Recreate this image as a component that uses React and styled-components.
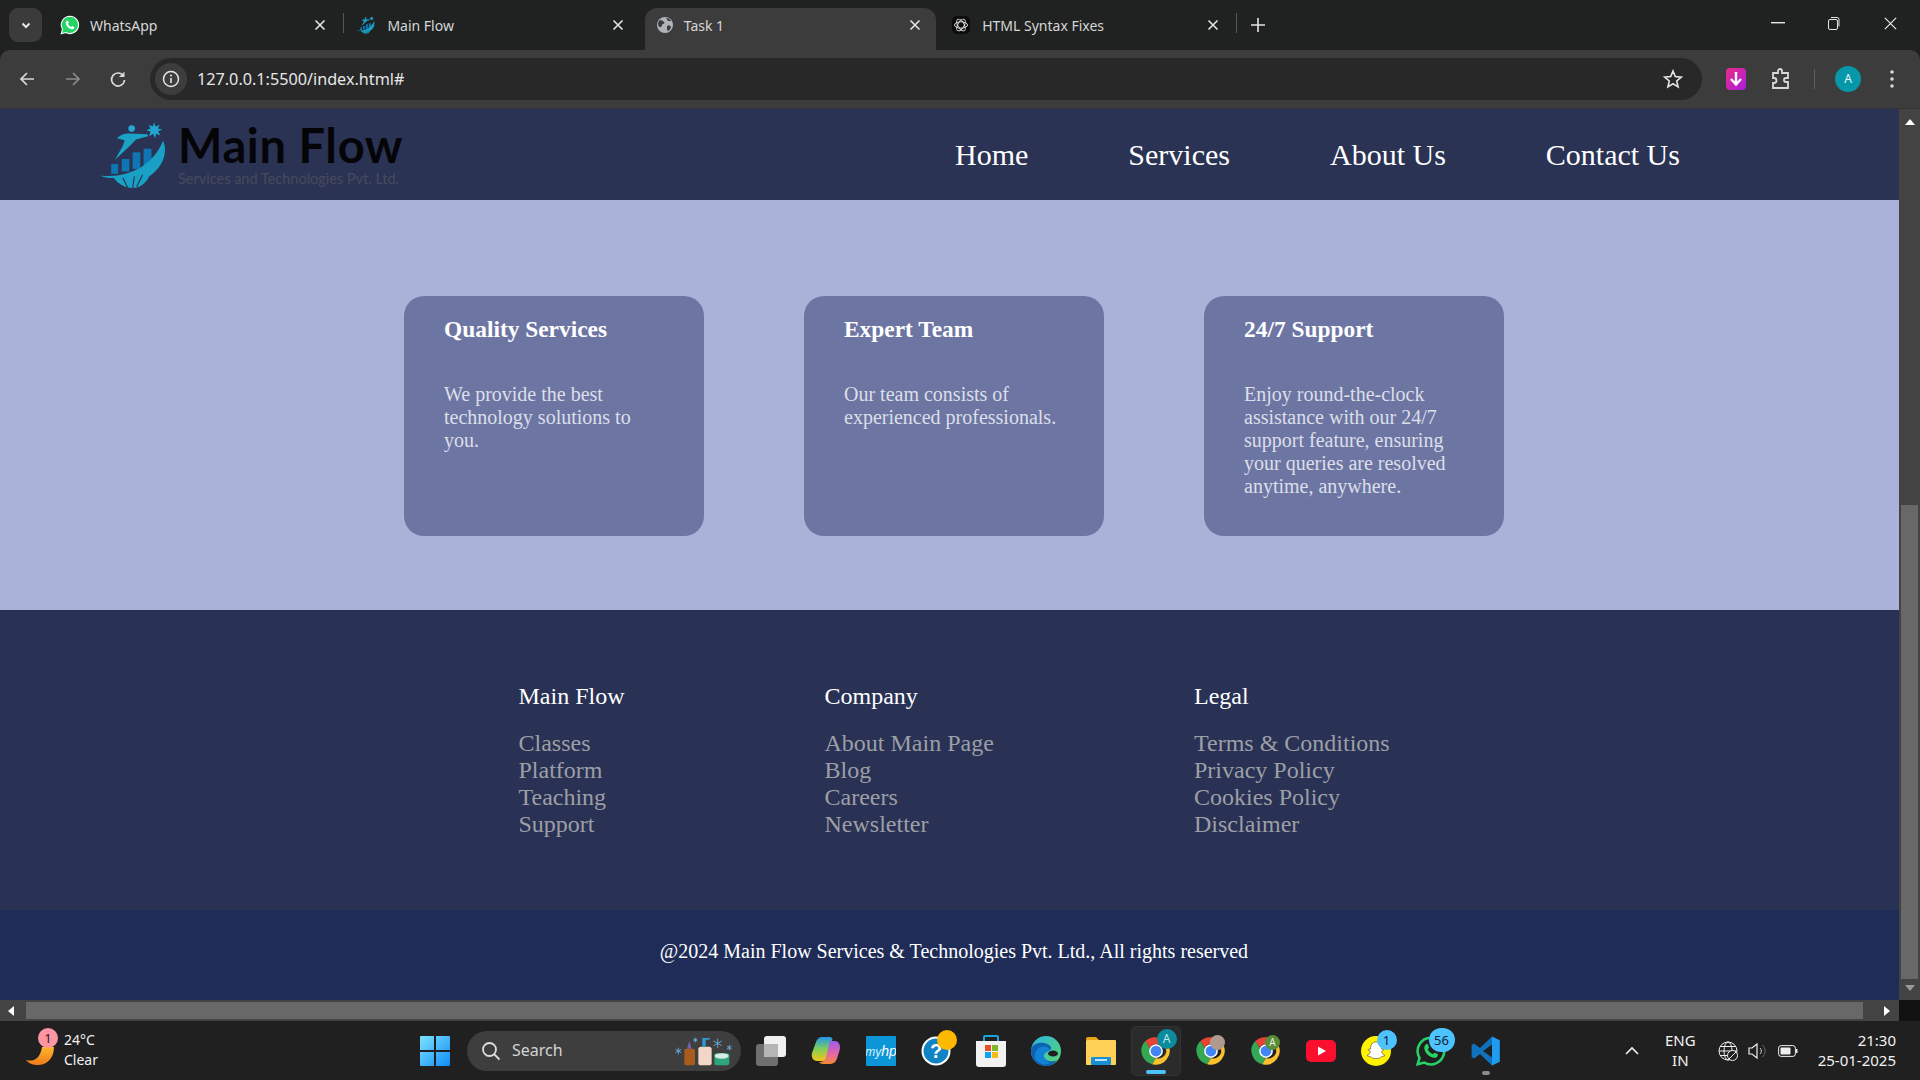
import React from "react";
import styled, { createGlobalStyle } from "styled-components";

const Global = createGlobalStyle`
  html, body { margin: 0; padding: 0; background: #202020; overflow: hidden; }
  * { box-sizing: border-box; }
`;
const ui = `"Noto Sans", "Open Sans", sans-serif`;
const serif = `"Liberation Serif", "Times New Roman", serif`;

const Screen = styled.div`
  width: 1920px; height: 1080px; display: flex; flex-direction: column; overflow: hidden; font-family: ${ui};
`;
const TabStrip = styled.div`
  height: 50px; flex: none; background: #202222; display: flex; align-items: flex-start; padding: 8px 0 0 9px;
`;
const TabMenu = styled.div`
  width: 33px; height: 34px; margin-right: 6px; border-radius: 9px; background: #3b3b3b; display: flex; align-items: center; justify-content: center; color: #e8e8e8;
`;
const Tab = styled.div`
  width: 297.4px; height: 42px; flex: none; display: flex; align-items: center; padding: 0 0 8px 0; position: relative;
  color: #d6d6d6; font-size: 14px; background: ${p => (p.$active ? "#3c3c3c" : "transparent")};
  border-radius: ${p => (p.$active ? "12px 12px 0 0" : "0")};
  ${p => p.$active && "margin-left:2px;margin-right:4.4px;width:291px;"}
  ${p => p.$sep && `&::after{content:"";position:absolute;right:1px;top:5px;height:20px;width:1px;background:#555;}`}
`;
const TabIcon = styled.span`
  width: ${p => (p.$active ? "39px" : "42px")}; padding-left: 12px; flex: none; display: flex; align-items: center;
`;
const TabTitle = styled.span`
  flex: 1; white-space: nowrap; margin-top: 1px;
`;
const TabClose = styled.span`
  width: ${p => (p.$active ? "27px" : "42px")}; flex: none; display: flex; padding-left: ${p => (p.$active ? "0" : "11px")}; color: #e4e4e4;
`;
const NewTab = styled.div`
  margin-left: 13px; height: 34px; display: flex; align-items: center; color: #e4e4e4;
`;
const WindowControls = styled.div`
  margin-left: auto; display: flex; height: 34px; margin-top: -2px; color: #e6e6e6; padding-right: 1px;
`;
const WinBtn = styled.div`
  width: 56.5px; display: flex; align-items: center; justify-content: center;
`;
const Toolbar = styled.div`
  height: 59px; flex: none; background: #3c3c3c; border-radius: 10px 10px 0 0; display: flex; align-items: center; padding: 0 0 1px 4px; border-bottom: 1px solid #333;
`;
const ToolBtn = styled.div`
  width: ${p => p.$w || 46}px; height: 40px; flex: none; display: flex; align-items: center; justify-content: center;
  color: ${p => (p.$dim ? "#8b8b8b" : "#d8d8d8")};
`;
const Omni = styled.div`
  margin-left: 10px; width: 1552px; height: 42px; background: #282828; border-radius: 21px; display: flex; align-items: center; padding: 0 19px 0 5px; color: #e6e6e6; flex: none;
`;
const InfoBubble = styled.div`
  width: 32px; height: 32px; border-radius: 50%; background: #3d3d3d; display: flex; align-items: center; justify-content: center; margin-right: 10px;
`;
const Url = styled.span`
  font-size: 16.2px; flex: 1;
`;
const ToolRight = styled.div`
  flex: 1; display: flex; align-items: center; padding-left: 13px;
`;
const Divider = styled.div`
  width: 1px; height: 20px; background: #5e5e5e; margin: 0 10px 0 10px;
`;
const Avatar = styled.div`
  width: 26px; height: 26px; border-radius: 50%; background: #0797ab; color: #e8f6f8; font-size: 12px; display: flex; align-items: center; justify-content: center; margin: 0 9px 0 10px;
`;
const Viewport = styled.div`
  flex: 1; min-height: 0; display: flex; overflow: hidden;
`;
const PageClip = styled.div`
  width: 1899px; overflow: hidden; flex: none;
`;
const Page = styled.div`
  width: 1908px; font-family: ${serif};
`;
const Nav = styled.nav`
  height: 91px; background: #2a3354; display: flex; align-items: center; padding: 0 0 0 99px;
`;
const Logo = styled.div`
  display: flex; align-items: flex-start; width: 856px; height: 70px; flex: none; margin-top: 2px;
`;
const LogoText = styled.div`
  margin-left: 11px; display: flex; flex-direction: column; font-family: Lato, sans-serif;
`;
const LogoName = styled.div`
  color: #050508; font-weight: 700; font-size: 47px; line-height: 44px; letter-spacing: .6px; white-space: nowrap; margin-top: 2px;
`;
const LogoSub = styled.div`
  color: #474a5a; font-size: 14.5px; line-height: 14px; white-space: nowrap; margin-top: 5px;
`;
const NavLinks = styled.div`
  display: flex; gap: 100px; padding-top: 1px;
`;
const NavLink = styled.a`
  color: #fff; font-size: 30px; white-space: nowrap;
`;
const Features = styled.section`
  height: 410px; background: #aab2da; display: flex; justify-content: center; gap: 100px; padding-top: 96px;
`;
const Card = styled.div`
  width: 300px; height: 240px; background: #6d76a3; border-radius: 20px; padding: 21px 40px 0;
`;
const CardTitle = styled.h3`
  margin: 0 0 41px; color: #fff; font-size: 23.4px; line-height: 25px; font-weight: 700;
`;
const CardText = styled.p`
  margin: 0; color: #dcdfe9; font-size: 20px; line-height: 23px;
`;
const FooterMain = styled.footer`
  height: 300px; background: #293254; display: grid; grid-template-columns: 306px 369.5px 1fr; padding: 70px 0 0 518.5px;
`;
const FootCol = styled.div`
  display: flex; flex-direction: column;
`;
const FootHead = styled.div`
  color: #fff; font-size: 24px; line-height: 32px; margin-bottom: 18px;
`;
const FootLink = styled.a`
  color: #9d9fa6; font-size: 24px; line-height: 27px; white-space: nowrap;
`;
const Copyright = styled.div`
  height: 90px; background: #1e2c57; color: #fff; font-size: 20px; display: flex; align-items: center; justify-content: center; padding-bottom: 8px;
`;
const VScroll = styled.div`
  width: 21px; flex: none; background: #434343; display: flex; flex-direction: column; align-items: center;
`;
const VArrow = styled.div`
  height: ${p => p.$h}px; flex: none; display: flex; align-items: center; justify-content: center;
`;
const VThumb = styled.div`
  width: 17px; height: 474px; background: #686868; margin-top: 370px; flex: none;
`;
const HScrollRow = styled.div`
  height: 21px; flex: none; display: flex; background: #434343; align-items: center;
`;
const HArrow = styled.div`
  width: ${p => p.$w}px; flex: none; display: flex; align-items: center; justify-content: center;
`;
const HThumb = styled.div`
  width: 1837px; height: 17px; background: #686868; flex: none; margin: 0 12px 0 5px;
`;
const Corner = styled.div`
  width: 21px; height: 21px; background: #121212; margin-left: auto; flex: none;
`;
const Taskbar = styled.div`
  height: 59px; flex: none; background: #202020; display: flex; align-items: center; padding-left: 26px; color: #fff; position: relative; font-size: 14px;
`;
const Weather = styled.div`
  width: 394px; flex: none; display: flex; align-items: center; gap: 10px; position: relative;
`;
const WeatherBadge = styled.div`
  position: absolute; left: 12px; top: -4px; width: 20px; height: 20px; border-radius: 50%; background: #ff96a3; color: #3a1115; font-size: 13px; display: flex; align-items: center; justify-content: center;
`;
const TwoLine = styled.div`
  display: flex; flex-direction: column; line-height: 20px; font-size: ${p => p.$size || 14}px; text-align: ${p => p.$align || "left"}; color: #f2f2f2; margin-top: -2px;
  margin-left: ${p => p.$ml || 0}px; margin-right: ${p => p.$mr || 0}px;
`;
const SearchBox = styled.div`
  margin-left: 17px; width: 274px; height: 40px; border-radius: 20px; background: #3e3e3e; display: flex; align-items: center; padding: 0 8px 0 14px; color: #d4d4d4; font-size: 16px; flex: none;
`;
const SearchLabel = styled.span`
  flex: 1; margin-left: 11px; padding-bottom: 2px;
`;
const AppIcon = styled.div`
  width: 55px; height: 50px; flex: none; display: flex; align-items: center; justify-content: center; position: relative;
  ${p => p.$active && "background:#2b2b2b;border-radius:5px;width:50px;margin:0 2.5px;border:1px solid #333;"}
  ${p => p.$mark && `&::after{content:"";position:absolute;bottom:1px;left:50%;transform:translateX(-50%);height:4px;border-radius:2px;width:${p.$mark === "on" ? 20 : 8}px;background:${p.$mark === "on" ? "#4cc2ff" : "#8a8a8a"};}`}
`;
const Pip = styled.div`
  position: absolute; right: ${p => p.$r}px; top: ${p => p.$t}px; width: ${p => p.$w || p.$s}px; height: ${p => p.$s}px; border-radius: ${p => p.$s / 2}px;
  background: ${p => p.$bg}; color: ${p => p.$fg || "#10222e"}; font-size: ${p => p.$font || 13}px; display: flex; align-items: center; justify-content: center;
`;
const AppRow = styled.div`
  display: flex; margin-left: 2px; align-items: center;
`;
const Tray = styled.div`
  position: absolute; right: 24px; top: 0; bottom: 0; display: flex; align-items: center;
`;
const TrayIcon = styled.div`
  width: ${p => p.$w || 30}px; display: flex; justify-content: center; color: #eee;
`;

const X = ({ s = 12, w = 1.6 }) => (
  <svg width={s} height={s} viewBox="0 0 12 12"><path d="M1.5 1.5l9 9M10.5 1.5l-9 9" stroke="currentColor" strokeWidth={w} /></svg>
);
const WaIcon = ({ s = 20 }) => (
  <svg width={s} height={s} viewBox="0 0 24 24">
    <path d="M12 1.5a10.4 10.4 0 0 0-9 15.6L1.5 22.5l5.5-1.4A10.4 10.4 0 1 0 12 1.5z" fill="#25d366" stroke="#fff" strokeWidth="1.3" />
    <path d="M8.4 6.9c.6-.5 1-.2 1.3.4l.8 1.8c.1.4-.6 1.1-.9 1.6.8 1.7 2 2.9 3.8 3.7.5-.5 1-1.3 1.5-1.1l1.9 1c.5.2.5.7.2 1.4-.6 1.3-2.2 1.7-3.7 1.2-3.3-1-5.7-3.4-6.3-6.6-.2-1.4.2-2.7 1.4-3.4z" fill="#fff" />
  </svg>
);
const WaOutline = () => (
  <svg width="32" height="32" viewBox="0 0 24 24">
    <path d="M12 2a10 10 0 0 0-8.6 15.1L2 22l5-1.3A10 10 0 1 0 12 2z" fill="none" stroke="#25d366" strokeWidth="1.9" />
    <path d="M8.4 6.9c.6-.5 1-.2 1.3.4l.8 1.8c.1.4-.6 1.1-.9 1.6.8 1.7 2 2.9 3.8 3.7.5-.5 1-1.3 1.5-1.1l1.9 1c.5.2.5.7.2 1.4-.6 1.3-2.2 1.7-3.7 1.2-3.3-1-5.7-3.4-6.3-6.6-.2-1.4.2-2.7 1.4-3.4z" fill="#25d366" />
  </svg>
);
const LogoMark = ({ s = 18, bg = "#2a3354" }) => (
  <svg width={s} height={s} viewBox="28 40 206 206">
    <circle cx="127" cy="63" r="10" fill="#27a6cf" />
    <path d="M82 92Q100 75 122 78L175 80L177 86L140 96L125 112L76 158L100 116L106 98Z" fill="#1ba3c6" />
    <path d="M195 44l4 13 13-6-6 12 14 3-13 5 7 13-13-5-3 13-6-13-12 7 4-14-13-4 13-5-6-12 13 6z" fill="#22a5cf" />
    <rect x="65" y="170" width="21" height="30" fill="#0f76b4" /><rect x="97" y="155" width="23" height="38" fill="#0f76b4" />
    <rect x="130" y="135" width="23" height="50" fill="#0f76b4" /><rect x="163" y="124" width="24" height="52" fill="#0f76b4" />
    <path d="M30 205C110 215 190 180 222 100C240 140 215 185 180 208C170 230 150 243 130 243C105 243 85 230 73 213C55 213 40 210 30 205Z" fill="#18a1c4" />
    <path d="M100 212l15 30M135 208l-5 35M160 203l-18 36" stroke={bg} strokeWidth="3.5" />
  </svg>
);
const Globe = ({ s = 16, c = "#b0b3b8" }) => (
  <svg width={s} height={s} viewBox="0 0 16 16"><circle cx="8" cy="8" r="8" fill={c} /><path d="M3 3c2 0 3 1 4 2s0 2-1 2-1 2-2 3-3-1-3-3 1-3 2-4zM10 9c2-1 4 0 4 1s-2 4-3 4-1-3-1-5zM9 1c2 0 4 1 5 3l-3 0-2-3z" fill="#3c3c3c" /></svg>
);
const GptIcon = () => (
  <svg width="18" height="18" viewBox="0 0 18 18"><rect width="18" height="18" rx="5" fill="#0c0c0c" /><g fill="none" stroke="#ddd" strokeWidth="1"><ellipse cx="9" cy="9" rx="6.5" ry="3.2" /><ellipse cx="9" cy="9" rx="6.5" ry="3.2" transform="rotate(60 9 9)" /><ellipse cx="9" cy="9" rx="6.5" ry="3.2" transform="rotate(120 9 9)" /></g></svg>
);
const Chrome = ({ s = 30 }) => (
  <svg width={s} height={s} viewBox="0 0 48 48">
    <path d="M24 2a22 22 0 0 1 19 11H24a11 11 0 0 0-10 6L7 8A22 22 0 0 1 24 2z" fill="#ea4335" />
    <path d="M7 8l8 13a11 11 0 0 0 9 14l-6 10A22 22 0 0 1 7 8z" fill="#34a853" />
    <path d="M43 13a22 22 0 0 1-25 32l6-10a11 11 0 0 0 9-22z" fill="#fbc02d" />
    <circle cx="24" cy="24" r="11" fill="#fff" /><circle cx="24" cy="24" r="8.6" fill="#4285f4" />
  </svg>
);
const Flake = ({ x, y, r }) => (
  <g transform={`translate(${x} ${y})`} stroke="#6fb4e6" strokeWidth="2.5">
    <path d={`M0 ${-r}V${r}M${-r * .87} ${-r / 2}L${r * .87} ${r / 2}M${r * .87} ${-r / 2}L${-r * .87} ${r / 2}`} />
  </g>
);

const tabs = [
  { t: "WhatsApp", i: <WaIcon />, sep: true },
  { t: "Main Flow", i: <LogoMark bg="#202222" /> },
  { t: "Task 1", i: <Globe />, active: true },
  { t: "HTML Syntax Fixes", i: <GptIcon />, sep: true },
];
const groups = [
  { h: "Main Flow", l: ["Classes", "Platform", "Teaching", "Support"] },
  { h: "Company", l: ["About Main Page", "Blog", "Careers", "Newsletter"] },
  { h: "Legal", l: ["Terms & Conditions", "Privacy Policy", "Cookies Policy", "Disclaimer"] },
];
const cards = [
  ["Quality Services", "We provide the best technology solutions to you."],
  ["Expert Team", "Our team consists of experienced professionals."],
  ["24/7 Support", "Enjoy round-the-clock assistance with our 24/7 support feature, ensuring your queries are resolved anytime, anywhere."],
];

export default function App() {
  return (
    <Screen>
      <Global />
      <TabStrip>
        <TabMenu><svg width="12" height="12" viewBox="0 0 12 12"><path d="M2.5 4.5 6 8l3.5-3.5" fill="none" stroke="currentColor" strokeWidth="2" /></svg></TabMenu>
        {tabs.map(t => (
          <Tab key={t.t} $active={t.active} $sep={t.sep}>
            <TabIcon $active={t.active}>{t.i}</TabIcon>
            <TabTitle>{t.t}</TabTitle>
            <TabClose $active={t.active}><X /></TabClose>
          </Tab>
        ))}
        <NewTab><svg width="14" height="14" viewBox="0 0 14 14"><path d="M7 0v14M0 7h14" stroke="currentColor" strokeWidth="1.6" /></svg></NewTab>
        <WindowControls>
          <WinBtn><svg width="14" height="2"><rect width="14" height="1.4" fill="currentColor" /></svg></WinBtn>
          <WinBtn><svg width="14" height="14" viewBox="0 0 14 14"><rect x="1.5" y="3.5" width="9" height="10" rx="1.5" fill="none" stroke="currentColor" /><path d="M4 1.5h6a2 2 0 0 1 2 2v7" fill="none" stroke="currentColor" /></svg></WinBtn>
          <WinBtn><X s={15} w={1} /></WinBtn>
        </WindowControls>
      </TabStrip>
      <Toolbar>
        <ToolBtn><svg width="18" height="18" viewBox="0 0 18 18"><path d="M16 9H3M9 3 3 9l6 6" fill="none" stroke="currentColor" strokeWidth="1.7" /></svg></ToolBtn>
        <ToolBtn $dim><svg width="18" height="18" viewBox="0 0 18 18"><path d="M2 9h13M9 3l6 6-6 6" fill="none" stroke="currentColor" strokeWidth="1.7" /></svg></ToolBtn>
        <ToolBtn $w={44}><svg width="18" height="18" viewBox="0 0 18 18"><path d="M14.5 6A6.5 6.5 0 1 0 15.5 10" fill="none" stroke="currentColor" strokeWidth="1.7" /><path d="M15.5 1.5v5.5H10z" fill="currentColor" /></svg></ToolBtn>
        <Omni>
          <InfoBubble><svg width="18" height="18" viewBox="0 0 18 18"><circle cx="9" cy="9" r="7.5" fill="none" stroke="#e6e6e6" strokeWidth="1.5" /><path d="M9 8v5" stroke="#e6e6e6" strokeWidth="1.6" /><circle cx="9" cy="5.5" r="1" fill="#e6e6e6" /></svg></InfoBubble>
          <Url>127.0.0.1:5500/index.html#</Url>
          <svg width="20" height="20" viewBox="0 0 20 20"><path d="M10 2l2.3 5.6 6 .5-4.6 3.9 1.4 5.9L10 14.8 4.9 17.9l1.4-5.9L1.7 8.1l6-.5z" fill="none" stroke="#e6e6e6" strokeWidth="1.6" /></svg>
        </Omni>
        <ToolRight>
          <ToolBtn $w={42}><svg width="20" height="22" viewBox="0 0 20 22"><defs><linearGradient id="ext" x1="0" y1="0" x2="1" y2="1"><stop offset="0" stopColor="#ec2b85" /><stop offset="1" stopColor="#a81ee0" /></linearGradient></defs><rect width="20" height="22" rx="4" fill="url(#ext)" /><path d="M10 4v12M5 11l5 5.5 5-5.5" fill="none" stroke="#fff" strokeWidth="2.4" /></svg></ToolBtn>
          <ToolBtn $w={47}><svg width="20" height="22" viewBox="0 0 20 22"><path d="M2 5h5V3a2 2 0 0 1 4 0v2h6v5h-2a2 2 0 0 0 0 4h2v6H2v-5h1a2.5 2.5 0 0 0 0-5H2z" fill="none" stroke="#d8d8d8" strokeWidth="1.8" /></svg></ToolBtn>
          <Divider />
          <Avatar>A</Avatar>
          <ToolBtn $w={44}><svg width="4" height="18" viewBox="0 0 4 18"><circle cx="2" cy="2" r="1.8" fill="#d8d8d8" /><circle cx="2" cy="9" r="1.8" fill="#d8d8d8" /><circle cx="2" cy="16" r="1.8" fill="#d8d8d8" /></svg></ToolBtn>
        </ToolRight>
      </Toolbar>
      <Viewport>
        <PageClip>
          <Page>
            <Nav>
              <Logo>
                <LogoMark s={68} />
                <LogoText>
                  <LogoName>Main Flow</LogoName>
                  <LogoSub>Services and Technologies Pvt. Ltd.</LogoSub>
                </LogoText>
              </Logo>
              <NavLinks>
                {["Home", "Services", "About Us", "Contact Us"].map(n => <NavLink key={n}>{n}</NavLink>)}
              </NavLinks>
            </Nav>
            <Features>
              {cards.map(([h, p]) => (
                <Card key={h}><CardTitle>{h}</CardTitle><CardText>{p}</CardText></Card>
              ))}
            </Features>
            <FooterMain>
              {groups.map(g => (
                <FootCol key={g.h}>
                  <FootHead>{g.h}</FootHead>
                  {g.l.map(l => <FootLink key={l}>{l}</FootLink>)}
                </FootCol>
              ))}
            </FooterMain>
            <Copyright>@2024 Main Flow Services &amp; Technologies Pvt. Ltd., All rights reserved</Copyright>
          </Page>
        </PageClip>
        <VScroll>
          <VArrow $h={26}><svg width="10" height="6"><path d="M5 0l5 6H0z" fill="#fff" /></svg></VArrow>
          <VThumb />
          <VArrow $h={18}><svg width="10" height="6"><path d="M5 6l5-6H0z" fill="#9a9a9a" /></svg></VArrow>
        </VScroll>
      </Viewport>
      <HScrollRow>
        <HArrow $w={21}><svg width="6" height="10"><path d="M0 5l6-5v10z" fill="#fff" /></svg></HArrow>
        <HThumb />
        <HArrow $w={24}><svg width="6" height="10"><path d="M6 5 0 0v10z" fill="#fff" /></svg></HArrow>
        <Corner />
      </HScrollRow>
      <Taskbar>
        <Weather>
          <svg width="28" height="28" viewBox="0 0 28 28"><defs><linearGradient id="moon" x1="0" y1="0" x2="0" y2="1"><stop offset="0" stopColor="#ffb52e" /><stop offset="1" stopColor="#ee7b1c" /></linearGradient></defs><path d="M28 10C28 22 20 28 12 28C7 28 2 26 0 23C8 25 14 22 16 10Z" fill="url(#moon)" /></svg>
          <WeatherBadge>1</WeatherBadge>
          <TwoLine><span>24°C</span><span>Clear</span></TwoLine>
        </Weather>
        <svg width="30" height="30" viewBox="0 0 30 30"><defs><linearGradient id="win" x1="0" y1="0" x2="1" y2="1"><stop offset="0" stopColor="#7fe3ff" /><stop offset="1" stopColor="#0f8cf5" /></linearGradient></defs><path d="M0 1a1 1 0 0 1 1-1h13v14H0zM16 0h13a1 1 0 0 1 1 1v13H16zM0 16h14v14H1a1 1 0 0 1-1-1zM16 16h14v13a1 1 0 0 1-1 1H16z" fill="url(#win)" /></svg>
        <SearchBox>
          <svg width="20" height="20" viewBox="0 0 20 20"><circle cx="8.5" cy="8.5" r="6.5" fill="none" stroke="#ddd" strokeWidth="1.8" /><path d="M13 13l5.5 5.5" stroke="#ddd" strokeWidth="1.8" /></svg>
          <SearchLabel>Search</SearchLabel>
          <svg width="60" height="32" viewBox="36 27 180 96">
            <Flake x={52} y={75} r={10} /><Flake x={103} y={42} r={7} /><Flake x={170} y={52} r={14} /><Flake x={205} y={65} r={8} />
            <path d="M78 68l7-24 7 24z" fill="#6d62b0" />
            <rect x="70" y="68" width="32" height="50" rx="5" fill="#a85b1c" />
            <rect x="112" y="62" width="40" height="56" rx="8" fill="#f2d7c6" />
            <path d="M124 62V36h22v5h-12v21z" fill="#2d9ad1" />
            <rect x="160" y="82" width="45" height="36" rx="6" fill="#2ea57a" />
            <ellipse cx="182" cy="90" rx="21" ry="8" fill="#d9ece4" />
          </svg>
        </SearchBox>
        <AppRow>
          <AppIcon><svg width="30" height="30" viewBox="0 0 30 30"><rect x="8" y="0" width="22" height="21" rx="3" fill="#f0f0f0" /><rect x="0" y="8" width="22" height="22" rx="3" fill="#6f6f6f" /><rect x="8" y="8" width="14" height="13" fill="#b5b5b5" /></svg></AppIcon>
          <AppIcon><svg width="30" height="30" viewBox="0 0 30 30"><defs><linearGradient id="cp" x1="0" y1="0" x2="0" y2="1"><stop offset="0" stopColor="#2296e8" /><stop offset=".5" stopColor="#7fd05a" /><stop offset="1" stopColor="#f5c518" /></linearGradient><linearGradient id="cp2" x1="0" y1="0" x2="0" y2="1"><stop offset="0" stopColor="#a05af0" /><stop offset=".6" stopColor="#e86aa0" /><stop offset="1" stopColor="#f58a30" /></linearGradient></defs><path d="M11 1h7c2 0 3 .5 3.5 2L17 20c-1 4-3 5-6 5H6C2 25 0 21 1 17L5 6c1-3 3-5 6-5z" fill="url(#cp)" /><path d="M19 5h5c3 0 5 3 5 6s-1 5-2 8c-1 5-3 9-8 9h-7c-2 0-3-1-4-2 4 0 6-1 7-5z" fill="url(#cp2)" /></svg></AppIcon>
          <AppIcon><svg width="30" height="30" viewBox="0 0 30 30"><rect width="30" height="30" rx="1" fill="#0c96d8" /><text x="15" y="20" textAnchor="middle" fontSize="12" fontStyle="italic" fill="#d9f0fb" fontFamily="Liberation Sans">my<tspan fontSize="14" fill="#fff">hp</tspan></text></svg></AppIcon>
          <AppIcon><svg width="30" height="30" viewBox="0 0 30 30"><circle cx="15" cy="15" r="14.5" fill="#fff" /><circle cx="15" cy="15" r="12.5" fill="#0f83c4" /><text x="15" y="22" textAnchor="middle" fontSize="20" fontWeight="700" fill="#fff" fontFamily="Liberation Sans">?</text></svg><Pip $bg="#ffb900" $s={20} $r={6.5} $t={4} /></AppIcon>
          <AppIcon><svg width="30" height="34" viewBox="0 0 30 34"><path d="M8 8V3a1 1 0 0 1 1-1h12a1 1 0 0 1 1 1v5" fill="none" stroke="#19a5dc" strokeWidth="2" /><path d="M0 7h30v23a3 3 0 0 1-3 3H3a3 3 0 0 1-3-3z" fill="#f2f2f2" /><rect x="9" y="11" width="6" height="6" fill="#e8502a" /><rect x="16" y="11" width="6" height="6" fill="#7cb828" /><rect x="9" y="18" width="6" height="6" fill="#0ea5ec" /><rect x="16" y="18" width="6" height="6" fill="#fcb913" /></svg></AppIcon>
          <AppIcon><svg width="30" height="30" viewBox="0 0 30 30"><defs><linearGradient id="ed" x1="0" y1="0" x2="1" y2="1"><stop offset="0" stopColor="#2bb4e4" /><stop offset="1" stopColor="#5ad86a" /></linearGradient></defs><circle cx="15" cy="15" r="15" fill="url(#ed)" /><path d="M0 15C0 8 8 6 13 7c6 1 9 5 6 7-4 2-7 3-6 7s8 6 13 3c-3 4-6 6-11 6C7 30 0 24 0 15z" fill="#0e62b0" /><path d="M4 22C3 14 9 9 15 11c3 1 4 2 4 3-4 2-7 3-6 7s4 5 7 6c-6 3-13 1-16-5z" fill="#1282d6" /><ellipse cx="22" cy="17.5" rx="5" ry="3" fill="#202020" /></svg></AppIcon>
          <AppIcon><svg width="30" height="30" viewBox="0 0 30 30"><path d="M0 3a2 2 0 0 1 2-2h8l3 3H0z" fill="#e8a317" /><rect y="4" width="30" height="25" rx="1" fill="#ffd257" /><rect x="5" y="21" width="20" height="8" rx="1" fill="#1a8fd8" /><rect x="9" y="23" width="12" height="2" fill="#bfe4fa" /></svg></AppIcon>
          <AppIcon $active $mark="on"><Chrome /><Pip $bg="#0a8b9e" $s={20} $r={3} $t={2} $fg="#bfe6ea" $font={12}>A</Pip></AppIcon>
          <AppIcon><Chrome /><Pip $bg="#b09a90" $s={15} $r={13} $t={9} /></AppIcon>
          <AppIcon><Chrome /><Pip $bg="#5b8c3a" $s={15} $r={13} $t={9} $fg="#e2efd8" $font={10}>A</Pip></AppIcon>
          <AppIcon><svg width="30" height="22" viewBox="0 0 30 22"><rect width="30" height="22" rx="5" fill="#fa0f2f" /><path d="M12 6.5l8 4.5-8 4.5z" fill="#fff" /></svg></AppIcon>
          <AppIcon><svg width="30" height="30" viewBox="0 0 30 30"><circle cx="15" cy="15" r="15" fill="#fff200" /><path d="M15 6c4 0 5.5 3 5.5 7 1 .5 2 0 2.5.5 0 1-2 1.5-2.5 2 .5 2 2 3 3.5 4-1 1-3 .5-4 1.5s-2 1.5-5 1.5-4-.5-5-1.5-3-.5-4-1.500c1.500-1 3-2 3.500-4-.5-.5-2.500-1-2.500-2 .5-.5 1.500 0 2.500-.5 0-4 1.500-7 5.500-7z" fill="#fff" stroke="#222" strokeWidth=".5" /></svg><Pip $bg="#4cc2ff" $s={20} $r={6.5} $t={4}>1</Pip></AppIcon>
          <AppIcon><WaOutline /><Pip $bg="#4cc2ff" $s={24} $w={26} $r={3.5} $t={2}>56</Pip></AppIcon>
          <AppIcon $mark="off"><svg width="30" height="30" viewBox="0 0 100 100"><path d="M70 2 96 14V86L70 98Z" fill="#1f9cf0" /><path d="M70 2 30 40 10 25 2 30V70L10 75 30 60 70 98V72L40 50 70 28Z" fill="#0e72be" /></svg></AppIcon>
        </AppRow>
        <Tray>
          <TrayIcon $w={26}><svg width="14" height="9" viewBox="0 0 14 9"><path d="M1 8l6-6 6 6" fill="none" stroke="#eee" strokeWidth="1.6" /></svg></TrayIcon>
          <TwoLine $align="center" $size={15} $ml={20} $mr={17}><span>ENG</span><span>IN</span></TwoLine>
          <TrayIcon><svg width="20" height="20" viewBox="0 0 20 20"><g fill="none" stroke="#eee" strokeWidth="1"><circle cx="10" cy="10" r="9" /><ellipse cx="10" cy="10" rx="4" ry="9" /><path d="M1 10h18M2 5.5h16M2 14.5h16" /></g><circle cx="14.5" cy="14.5" r="5" fill="#202020" stroke="#eee" /><path d="M11 18l7-7" stroke="#eee" /></svg></TrayIcon>
          <TrayIcon><svg width="20" height="18" viewBox="0 0 20 18"><path d="M1 6h3l5-4v14l-5-4H1z" fill="none" stroke="#eee" strokeWidth="1.2" /><path d="M12 6a4 4 0 0 1 0 6" fill="none" stroke="#ccc" /><path d="M14.5 3a8 8 0 0 1 0 12" fill="none" stroke="#666" /></svg></TrayIcon>
          <TrayIcon><svg width="20" height="12" viewBox="0 0 20 12"><rect x=".6" y=".6" width="16.8" height="10.8" rx="2.5" fill="none" stroke="#eee" /><rect x="2.5" y="2.5" width="10" height="7" rx="1" fill="#eee" /><rect x="18" y="4" width="1.5" height="4" fill="#eee" /></svg></TrayIcon>
          <TwoLine $align="right" $size={15} $ml={15}><span>21:30</span><span>25-01-2025</span></TwoLine>
        </Tray>
      </Taskbar>
    </Screen>
  );
}
